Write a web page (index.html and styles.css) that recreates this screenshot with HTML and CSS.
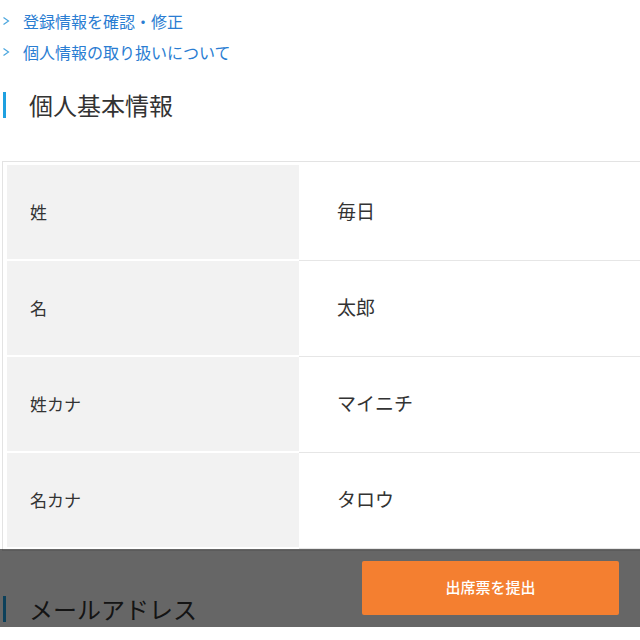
FILE: index.html
```html
<!DOCTYPE html>
<html lang="ja">
<head>
<meta charset="utf-8">
<link rel="stylesheet" href="styles.css">
</head>
<body>
<ul class="links">
  <li><svg class="chev" width="8" height="10" viewBox="0 0 8 10"><polyline points="1.5,1.5 6.5,5 1.5,8.5" fill="none" stroke="#4aa6de" stroke-width="1.2"/></svg><a href="#">登録情報を確認・修正</a></li>
  <li><svg class="chev" width="8" height="10" viewBox="0 0 8 10"><polyline points="1.5,1.5 6.5,5 1.5,8.5" fill="none" stroke="#4aa6de" stroke-width="1.2"/></svg><a href="#">個人情報の取り扱いについて</a></li>
</ul>
<h2 class="sec">個人基本情報</h2>
<div class="table">
  <div class="row"><div class="label">姓</div><div class="value">毎日</div></div>
  <div class="row"><div class="label">名</div><div class="value">太郎</div></div>
  <div class="row"><div class="label">姓カナ</div><div class="value">マイニチ</div></div>
  <div class="row"><div class="label">名カナ</div><div class="value">タロウ</div></div>
</div>
<h2 class="sec sec2">メールアドレス</h2>
<div class="spacer"></div>
<div class="bar">
  <button class="submit">出席票を提出</button>
</div>
</body>
</html>
```
FILE: styles.css
```css
html, body {
  margin: 0;
  padding: 0;
  background: #fff;
  overflow-x: hidden;
}
body {
  font-family: "Noto Sans CJK JP", "Noto Sans", sans-serif;
  color: #333;
  width: 640px;
}
.links {
  list-style: none;
  margin: 0;
  padding: 5px 0 0 0;
}
.links li {
  display: flex;
  align-items: center;
  height: 31px;
  font-size: 16px;
}
.chev {
  margin-left: 2px;
  margin-right: 13px;
}
.links a {
  color: #2a7dd2;
  text-decoration: none;
}
.sec {
  margin: 25px 0 0 3px;
  border-left: 3px solid #1ea0e0;
  padding-left: 23px;
  font-size: 24px;
  font-weight: normal;
  line-height: 26px;
  height: 26px;
  color: #333;
}
.table {
  margin: 43px 0 0 2px;
  border: 1px solid #e3e3e3;
  border-right: none;
  padding: 3px 0 1px 4px;
  width: 800px;
}
.row {
  display: flex;
  height: 96px;
}
.label {
  width: 292px;
  height: 94px;
  box-sizing: border-box;
  background: #f2f2f2;
  padding: 0 0 2px 23px;
  display: flex;
  align-items: center;
  font-size: 17px;
}
.value {
  flex: 1;
  height: 96px;
  box-sizing: border-box;
  border-bottom: 1px solid #e6e6e6;
  padding: 0 0 4px 38px;
  display: flex;
  align-items: center;
  font-size: 19px;
}
.sec2 {
  margin-top: 45px;
}
.spacer {
  height: 300px;
}
.bar {
  position: fixed;
  left: 0;
  right: 0;
  bottom: 13px;
  height: 78px;
  background: rgba(0, 0, 0, 0.6);
  display: flex;
  justify-content: flex-end;
  align-items: center;
  padding-right: 21px;
}
.submit {
  width: 257px;
  height: 54px;
  border: none;
  border-radius: 2px;
  background: #f47f30;
  color: #fff;
  font-family: "Noto Sans CJK JP", sans-serif;
  font-size: 15px;
  font-weight: 500;
  padding: 0 0 4px 0;
}
```
